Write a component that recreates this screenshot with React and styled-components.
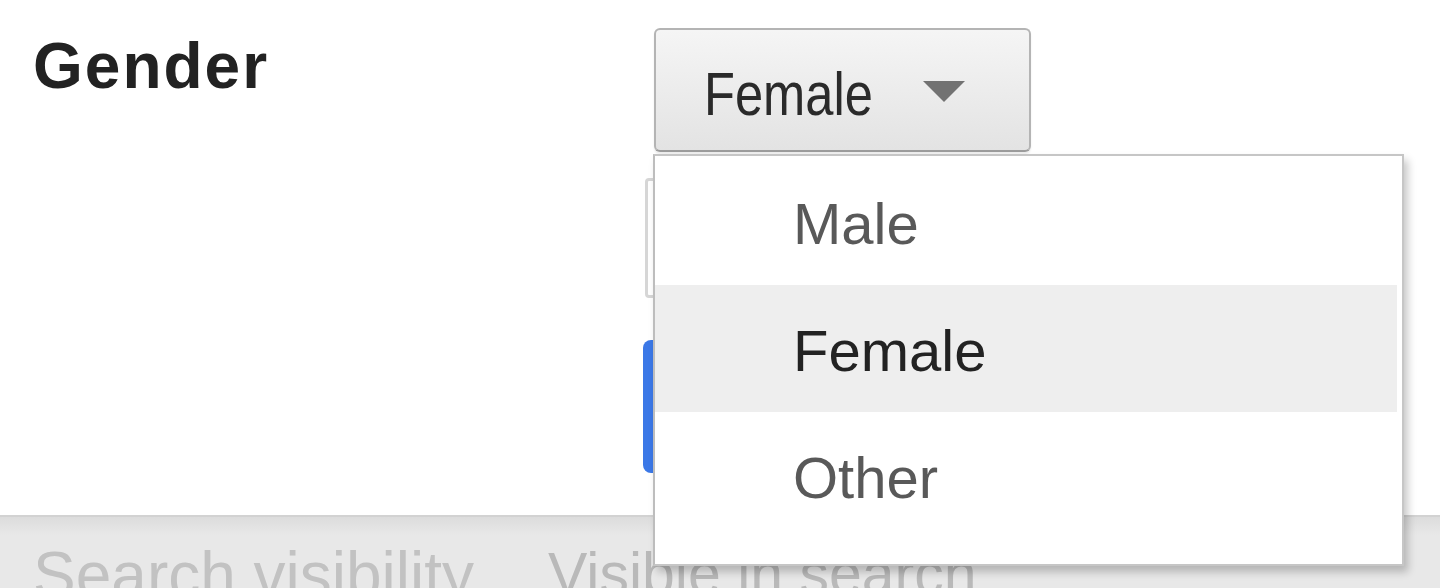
import styled, { createGlobalStyle } from "styled-components";

const GlobalStyle = createGlobalStyle`
  html, body {
    margin: 0;
    padding: 0;
    background: #ffffff;
  }
  body {
    font-family: Arial, "Liberation Sans", sans-serif;
  }
`;

const options = [
  { id: "male", label: "Male" },
  { id: "female", label: "Female" },
  { id: "other", label: "Other" },
];

export default function App() {
  const selected = "female";

  return (
    <Page>
      <GlobalStyle />
      <GenderRow>
        <FieldLabel>Gender</FieldLabel>
        <Field>
          <SelectButton>
            <ButtonText>Female</ButtonText>
            <Caret />
          </SelectButton>
          <HiddenInput />
          <SaveButton />

          <Menu>
            {options.map((opt) => (
              <MenuItem key={opt.id} $active={opt.id === selected}>
                {opt.label}
              </MenuItem>
            ))}
          </Menu>
        </Field>
      </GenderRow>

      <Footer>
        <FooterLabel>Search visibility</FooterLabel>
        <FooterValue>Visible in search</FooterValue>
      </Footer>
    </Page>
  );
}

const Page = styled.div`
  width: 1440px;
  height: 588px;
  overflow: hidden;
  display: flex;
  flex-direction: column;
  background: #ffffff;
`;

const GenderRow = styled.div`
  height: 515px;
  display: flex;
  flex-shrink: 0;
`;

const FieldLabel = styled.div`
  width: 610px;
  padding: 34px 0 0 33px;
  font-family: Arial, "Liberation Sans", sans-serif;
  font-weight: 700;
  font-size: 64px;
  line-height: 1;
  letter-spacing: 2px;
  color: #222222;
`;

const Field = styled.div`
  position: relative;
  flex: 1;
  display: flex;
  flex-direction: column;
  align-items: flex-start;
`;

const SelectButton = styled.div`
  margin: 28px 0 0 11px;
  width: 377px;
  height: 124px;
  box-sizing: border-box;
  padding: 8px 0 0 48px;
  display: flex;
  align-items: center;
  border: 2px solid #b4b4b4;
  border-bottom-color: #9c9c9c;
  border-radius: 6px;
  background: linear-gradient(#f5f5f5, #e3e3e3);
  box-shadow: 0 2px 2px rgba(0, 0, 0, 0.08);
`;

const ButtonText = styled.span`
  display: inline-block;
  font-family: Arial, "Liberation Sans", sans-serif;
  font-size: 61px;
  line-height: 1;
  color: #2a2a2a;
  transform: scaleX(0.83);
  transform-origin: left center;
`;

const Caret = styled.span`
  margin: -6px 0 0 16px;
  width: 0;
  height: 0;
  border-top: 21px solid #727272;
  border-left: 21px solid transparent;
  border-right: 21px solid transparent;
`;

const HiddenInput = styled.div`
  margin: 26px 0 0 2px;
  width: 420px;
  height: 120px;
  box-sizing: border-box;
  border: 3px solid #d6d6d6;
  border-radius: 4px;
`;

const SaveButton = styled.div`
  margin-top: 42px;
  width: 240px;
  height: 133px;
  border-radius: 8px;
  background: #3b78e7;
`;

const Menu = styled.div`
  position: absolute;
  z-index: 3;
  top: 154px;
  left: 10px;
  width: 751px;
  height: 412px;
  box-sizing: border-box;
  padding: 2px 0 0 0;
  background: #ffffff;
  border: 2px solid #c6c6c6;
  border-left-color: #bdbdbd;
  box-shadow: 4px 6px 8px rgba(0, 0, 0, 0.22);
`;

const MenuItem = styled.div`
  height: 127px;
  margin-right: 5px;
  display: flex;
  align-items: center;
  padding: 4px 0 0 138px;
  box-sizing: border-box;
  font-family: Arial, "Liberation Sans", sans-serif;
  font-size: 58px;
  color: ${(p) => (p.$active ? "#222222" : "#595959")};
  background: ${(p) => (p.$active ? "#eeeeee" : "transparent")};
`;

const Footer = styled.div`
  flex: 1;
  display: flex;
  align-items: flex-start;
  box-sizing: border-box;
  padding: 26px 0 0 33px;
  border-top: 2px solid #d2d2d2;
  background: linear-gradient(#dcdcdc, #e8e8e8 18px, #e8e8e8);
  font-family: Arial, "Liberation Sans", sans-serif;
  line-height: 1;
`;

const FooterLabel = styled.div`
  width: 515px;
  font-size: 64px;
  color: #c2c2c2;
  white-space: nowrap;
`;

const FooterValue = styled.div`
  margin-top: 2px;
  font-size: 59px;
  color: #b9b9b9;
  white-space: nowrap;
`;
